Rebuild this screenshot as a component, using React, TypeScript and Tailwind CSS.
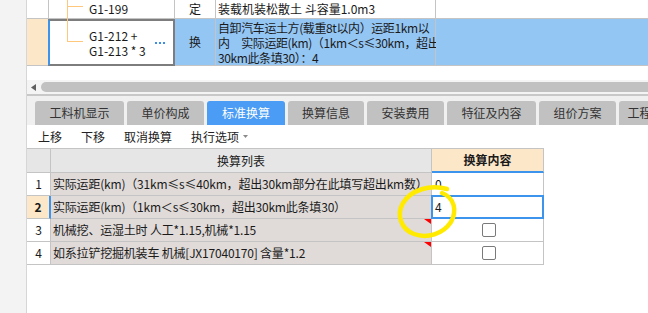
const tabs = [
  { label: '工料机显示', w: 'w-[89px]' },
  { label: '单价构成', w: 'w-[77px]' },
  { label: '标准换算', w: 'w-[78px]', active: true },
  { label: '换算信息', w: 'w-[76px]' },
  { label: '安装费用', w: 'w-[77px]' },
  { label: '特征及内容', w: 'w-[89px]' },
  { label: '组价方案', w: 'w-[77px]' },
  { label: '工程量明细', w: 'w-[77px]' },
];

const rows = [
  { no: '1', text: '实际运距(km)（31km≤s≤40km，超出30km部分在此填写超出km数）', value: '0' },
  { no: '2', text: '实际运距(km)（1km＜s≤30km，超出30km此条填30）', value: '4', selected: true },
  { no: '3', text: '机械挖、运湿土时 人工*1.15,机械*1.15', check: true, flag: true },
  { no: '4', text: '如系拉铲挖掘机装车 机械[JX17040170] 含量*1.2', check: true, flag: true },
];

const TopGrid = () => (
  <div className="grid grid-cols-[21px_127px_41px_220px_1fr] grid-rows-[19px_47px]">
    {/* row 1 */}
    <div className="border-b border-[#c4c4c4]" />
    <div className="relative flex items-center border-x border-b border-[#c4c4c4] pl-[40px]">
      <span className="absolute left-[18px] top-0 bottom-[-1px] w-px bg-[#ffc77c]" />
      <span className="absolute left-[18px] top-[6px] h-px w-[16px] bg-[#ffc77c]" />
      <span>G1-199</span>
    </div>
    <div className="flex items-center justify-center border-r border-b border-[#c4c4c4]">定</div>
    <div className="flex items-center overflow-hidden border-r border-b border-[#c4c4c4] pl-[2px] whitespace-nowrap">装载机装松散土 斗容量1.0m3</div>
    <div className="border-b border-[#c4c4c4]" />

    {/* row 2 */}
    <div className="border-b border-[#c4c4c4] bg-[#fde7c9]" />
    <div className="relative flex items-center gap-[9px] border-2 border-[#7d7d7d] border-l-[#3d94ec] pl-[39px]">
      <span className="absolute left-[17px] top-[-2px] h-[22px] w-px bg-[#ffc77c]" />
      <span className="absolute left-[17px] top-[20px] h-px w-[16px] bg-[#ffc77c]" />
      <div className="flex flex-col leading-[15px] whitespace-pre">
        <span>G1-212 +</span>
        <span>G1-213 * 3</span>
      </div>
      <div className="flex gap-[2px] pt-[1px]">
        <span className="h-[2px] w-[2px] bg-[#3a8ee6]" />
        <span className="h-[2px] w-[2px] bg-[#3a8ee6]" />
        <span className="h-[2px] w-[2px] bg-[#3a8ee6]" />
      </div>
    </div>
    <div className="flex items-center justify-center border-r border-b border-[#c4c4c4] bg-[#94c6f4]">换</div>
    <div className="flex flex-col justify-center border-r border-b border-[#c4c4c4] bg-[#94c6f4] pl-[2px] leading-[15px] tracking-[-0.4px] whitespace-nowrap">
      <span>自卸汽车运土方(载重8t以内）运距1km以</span>
      <span>内　实际运距(km)（1km＜s≤30km，超出</span>
      <span>30km此条填30）：4</span>
    </div>
    <div className="border-b border-[#c4c4c4] bg-[#94c6f4]" />
  </div>
);

const Scrollbar = () => (
  <div className="flex h-[14px] items-stretch bg-[#f4f4f4] py-[2px] pl-[4px]">
    <div className="flex w-[5px] items-center">
      <svg width="5" height="7" viewBox="0 0 5 7">
        <polygon points="0,3.5 5,0 5,7" fill="#5f5f5f" />
      </svg>
    </div>
    <div className="ml-[5px] flex-1 rounded-l-full bg-[#c1c1c1]" />
  </div>
);

const Tabs = () => (
  <div className="flex gap-[3px] overflow-hidden border-t-2 border-[#c8c8c8] bg-[#f0f0f0] pt-[5px] pl-[8px]">
    {tabs.map(t => (
      <div
        key={t.label}
        className={`flex h-[24px] shrink-0 items-center justify-center rounded-t-[3px] text-[12px] ${t.w} ${
          t.active ? 'bg-[#4a9cf4] text-white' : 'bg-[#c1c1c1] text-[#333]'
        }`}
      >
        {t.label}
      </div>
    ))}
  </div>
);

const Toolbar = () => (
  <div className="flex h-[23px] items-center gap-[19px] bg-white pl-[11px] text-[12px] text-[#222]">
    <span>上移</span>
    <span>下移</span>
    <span>取消换算</span>
    <span className="flex items-center gap-[4px]">
      执行选项
      <svg width="5" height="3" viewBox="0 0 5 3">
        <polygon points="0,0 5,0 2.5,3" fill="#8a8a8a" />
      </svg>
    </span>
  </div>
);

const Table = () => (
  <div className="grid w-[517px] grid-cols-[24px_381px_112px] border-t border-[#c4c4c4]">
    <div className="h-[24px] border-r border-b border-[#c4c4c4] bg-[#e6e6e6]" />
    <div className="flex h-[24px] items-center justify-center border-r border-b border-[#c4c4c4] bg-[#e6e6e6]">换算列表</div>
    <div className="flex h-[24px] items-center justify-center border-r border-[#c4c4c4] border-b-2 border-b-[#3d94ec] bg-[#fde7c9] font-bold">换算内容</div>
    {rows.map(r => (
      <Row key={r.no} {...r} />
    ))}
  </div>
);

type RowProps = { no: string; text: string; value?: string; selected?: boolean; check?: boolean; flag?: boolean };

const Row = ({ no, text, value, selected, check, flag }: RowProps) => (
  <>
    <div
      className={`flex h-[23px] items-center justify-center border-b border-[#c4c4c4] ${
        selected ? 'border-r-2 border-r-[#3d94ec] bg-[#fde7c9] font-bold' : 'border-r bg-white'
      }`}
    >
      {no}
    </div>
    <div className="relative flex h-[23px] items-center overflow-hidden border-r border-b border-[#c4c4c4] bg-[#e0dbd8] pl-[2px] tracking-[-0.2px] whitespace-nowrap">
      {text}
      {flag && (
        <svg className="absolute top-0 right-0" width="7" height="5" viewBox="0 0 7 5">
          <polygon points="0,0 7,0 7,5" fill="#ff0000" />
        </svg>
      )}
    </div>
    <div className="relative flex h-[23px] items-center border-r border-b border-[#c4c4c4] bg-white pl-[3px]">
      {selected && <div className="absolute -top-px -left-px right-[-1px] bottom-[-1px] border-2 border-[#3d94ec]" />}
      {value}
      {check && <div className="mx-auto h-[14px] w-[14px] rounded-[2px] border border-[#7a7a7a] bg-white" />}
    </div>
  </>
);

const Annotation = () => (
  <svg className="pointer-events-none absolute top-0 left-0" width="648" height="313" viewBox="0 0 648 313">
    <path
      d="M 447 189 C 430 184, 411 190, 403 203 C 396 215, 401 229, 414 234 C 427 239, 443 234, 451 222 C 457 211, 455 198, 442 193"
      fill="none"
      stroke="#ffea00"
      strokeWidth="4.5"
      strokeLinecap="round"
    />
  </svg>
);

export default function App() {
  return (
    <div className="relative flex h-[313px] w-[648px] overflow-hidden bg-white font-['Noto_Sans_CJK_SC',sans-serif] text-[12px] leading-none text-[#1a1a1a]">
      <div className="w-[27px] shrink-0 border-r border-[#d6d6d6] bg-[#f3f3f3]" />
      <div className="flex min-w-0 flex-1 flex-col">
        <TopGrid />
        <div className="h-[14px] shrink-0" />
        <Scrollbar />
        <Tabs />
        <Toolbar />
        <Table />
      </div>
      <Annotation />
    </div>
  );
}
